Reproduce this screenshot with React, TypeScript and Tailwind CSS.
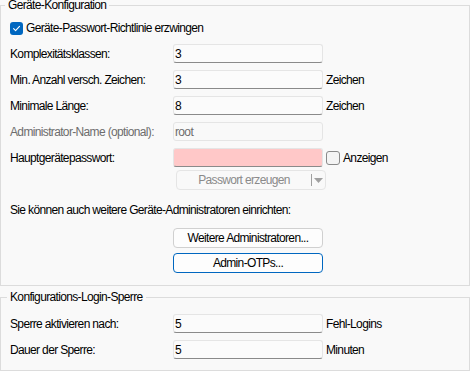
import React from 'react';

const Check = ({ checked }: { checked?: boolean }) =>
  checked ? (
    <span className="flex h-[13px] w-[13px] shrink-0 items-center justify-center rounded-[3px] bg-[#0067c0]">
      <svg width="9" height="9" viewBox="0 0 9 9" fill="none">
        <path d="M1.6 4.7 3.6 6.7 7.5 2.3" stroke="#fff" strokeWidth="1.1" strokeLinecap="round" strokeLinejoin="round" />
      </svg>
    </span>
  ) : (
    <span className="block h-[14px] w-[14px] shrink-0 rounded-[3px] border border-[#8a8a8a] bg-[#f4f4f4]" />
  );

type FieldProps = { value?: string; variant?: 'normal' | 'disabled' | 'error' };

const Field = ({ value = '', variant = 'normal' }: FieldProps) => {
  const tone =
    variant === 'disabled'
      ? 'bg-[#f9f9f9] border-[#e5e5e5] text-[#6d6d6d]'
      : variant === 'error'
        ? 'bg-[#ffc8c8] border-[#e5e5e5] border-b-[#8a8a8a]'
        : 'bg-[#fbfbfb] border-[#e5e5e5] border-b-[#8a8a8a]';
  return (
    <div className={`flex h-[19px] w-[150px] shrink-0 items-center rounded-[3px] border pl-[1px] ${tone}`}>
      {value}
    </div>
  );
};

type RowProps = { label: string; children: React.ReactNode; suffix?: React.ReactNode; disabled?: boolean; className?: string };

const Row = ({ label, children, suffix, disabled, className = '' }: RowProps) => (
  <div className={`flex h-[19px] items-center ${className}`}>
    <span className={`w-[163px] shrink-0 whitespace-nowrap ${disabled ? 'text-[#6d6d6d]' : ''}`}>{label}</span>
    {children}
    {suffix && <span className="ml-[3px] flex items-center">{suffix}</span>}
  </div>
);

const Button = ({ label, focused, className = '' }: { label: string; focused?: boolean; className?: string }) => (
  <div
    className={`ml-[163px] flex h-[20px] w-[150px] items-center justify-center rounded-[4px] border bg-[#fdfdfd] ${
      focused ? 'border-[#0067c0]' : 'border-[#d0d0d0]'
    } ${className}`}
  >
    {label}
  </div>
);

export default function App() {
  return (
    <div
      className="h-[371px] w-[470px] overflow-hidden bg-[#f9f9f9] text-[12px] leading-[16px] tracking-[-0.65px] text-black"
      style={{ fontFamily: '"Liberation Sans", Arial, sans-serif' }}
    >
      <fieldset className="h-[286px] border border-[#dcdcdc]">
        <legend className="ml-[4px] px-[3px] leading-[10px]">Geräte-Konfiguration</legend>
        <div className="pl-[9px]">
          <div className="mt-[10px] flex h-[16px] items-center gap-[3px]">
            <Check checked />
            <span>Geräte-Passwort-Richtlinie erzwingen</span>
          </div>

          <Row label="Komplexitätsklassen:" className="mt-[8px]">
            <Field value="3" />
          </Row>
          <Row label="Min. Anzahl versch. Zeichen:" className="mt-[7px]" suffix="Zeichen">
            <Field value="3" />
          </Row>
          <Row label="Minimale Länge:" className="mt-[7px]" suffix="Zeichen">
            <Field value="8" />
          </Row>
          <Row label="Administrator-Name (optional):" className="mt-[7px]" disabled>
            <Field value="root" variant="disabled" />
          </Row>
          <Row
            label="Hauptgerätepasswort:"
            className="mt-[7px]"
            suffix={
              <span className="flex items-center gap-[3px]">
                <Check />
                <span>Anzeigen</span>
              </span>
            }
          >
            <Field variant="error" />
          </Row>

          <div className="ml-[166px] mt-[3px] flex h-[20px] w-[150px] items-stretch rounded-[4px] border border-[#e5e5e5] bg-[#f9f9f9] text-[#8a8a8a]">
            <span className="flex flex-1 items-center justify-center">Passwort erzeugen</span>
            <span className="my-[3px] w-px bg-[#a0a0a0]" />
            <span className="flex w-[13px] items-center justify-center">
              <svg width="9" height="5" viewBox="0 0 9 5">
                <path d="M0 0h9L4.5 5z" fill="#a0a0a0" />
              </svg>
            </span>
          </div>

          <div className="mt-[12px] h-[16px]">Sie können auch weitere Geräte-Administratoren einrichten:</div>

          <Button label="Weitere Administratoren..." className="mt-[10px]" />
          <Button label="Admin-OTPs..." focused className="mt-[5px]" />
        </div>
      </fieldset>

      <fieldset className="mt-[6px] h-[79px] border border-[#dcdcdc]">
        <legend className="ml-[6px] px-[3px] leading-[10px]">Konfigurations-Login-Sperre</legend>
        <div className="pl-[9px]">
          <Row label="Sperre aktivieren nach:" className="mt-[12px]" suffix="Fehl-Logins">
            <Field value="5" />
          </Row>
          <Row label="Dauer der Sperre:" className="mt-[7px]" suffix="Minuten">
            <Field value="5" />
          </Row>
        </div>
      </fieldset>
    </div>
  );
}
